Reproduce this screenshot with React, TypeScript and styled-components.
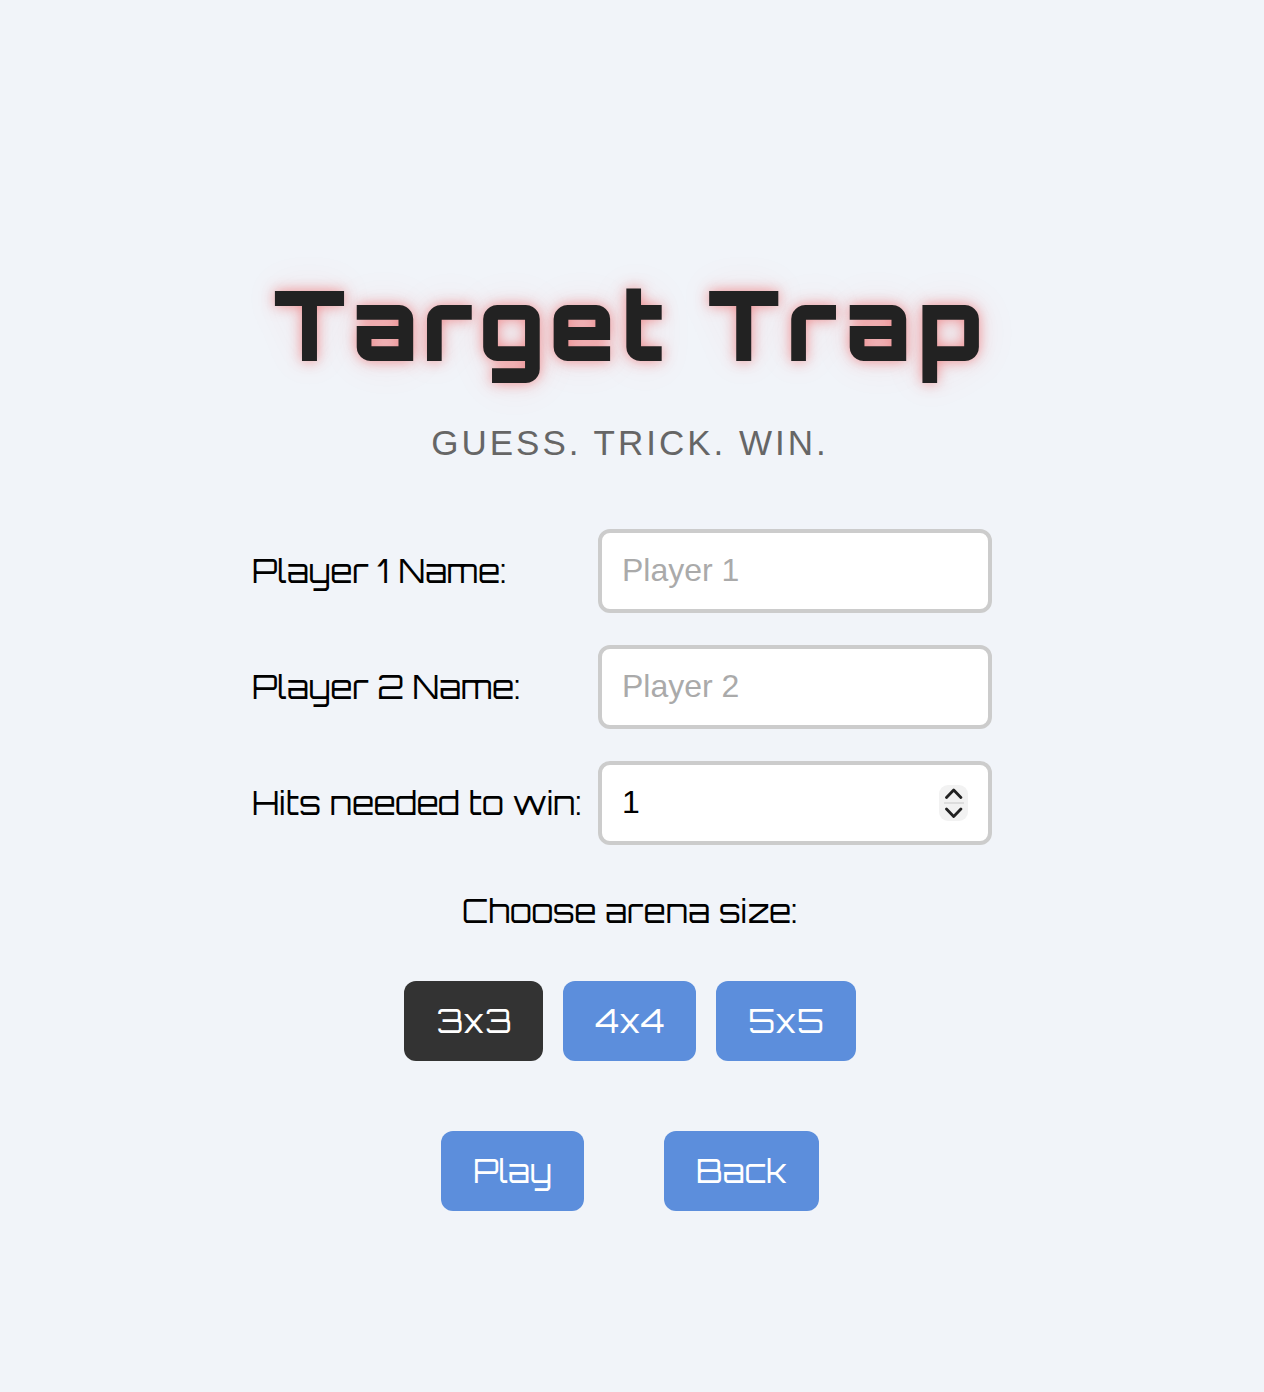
import React, { useState } from "react";
import styled, { createGlobalStyle } from "styled-components";

const display = `Orbitron, "DejaVu Sans", Verdana, sans-serif`;
const body = `Helvetica, "Liberation Sans", Arial, sans-serif`;

const GlobalStyle = createGlobalStyle`
  *, *::before, *::after { box-sizing: border-box; }
  body {
    margin: 0;
    background: #f1f4f9;
    color: #000;
    font-family: ${body};
  }
`;

const Page = styled.main`
  min-height: 100vh;
  padding: 84px 4px 0 0;
  display: flex;
  flex-direction: column;
  align-items: center;
  justify-content: center;
`;

const Title = styled.h1`
  margin: 0;
  font-family: ${display};
  font-size: 96px;
  line-height: 118px;
  font-weight: 900;
  letter-spacing: 6px;
  text-align: center;
  color: #222;
  text-shadow: 0 0 14px rgba(236, 60, 60, 0.55), 0 0 40px rgba(240, 60, 60, 0.1);
`;

const Tagline = styled.p`
  margin: 38px 0 0;
  font-size: 35px;
  line-height: 44px;
  letter-spacing: 3px;
  text-align: center;
  text-transform: uppercase;
  color: #666;
`;

const Form = styled.form`
  margin-top: 64px;
  display: flex;
  flex-direction: column;
  align-items: center;
`;

const Fields = styled.div`
  width: 756px;
  max-width: 100%;
  padding-right: 16px;
  display: flex;
  flex-direction: column;
  gap: 32px;
`;

const Field = styled.div`
  display: flex;
  align-items: center;
  justify-content: space-between;
`;

const Label = styled.label`
  font-family: ${display};
  font-size: 32px;
  line-height: 40px;
  white-space: nowrap;
`;

const Box = styled.div`
  width: 394px;
  min-width: 0;
  height: 84px;
  padding: 0 20px;
  display: flex;
  align-items: center;
  background: #fff;
  border: 4px solid #ccc;
  border-radius: 12px;
`;

const Input = styled.input`
  flex: 1;
  min-width: 0;
  padding: 0 0 2px;
  border: 0;
  outline: 0;
  background: transparent;
  color: #000;
  font-family: ${body};
  font-size: 32px;
  line-height: 40px;
  appearance: textfield;

  &::placeholder { color: #aaa; opacity: 1; }
  &::-webkit-inner-spin-button { appearance: none; margin: 0; }
`;

const Stepper = styled.div`
  width: 29px;
  height: 36px;
  display: flex;
  flex-direction: column;
  align-items: center;
  background: #f2f2f2;
  border-radius: 9px;
`;

const Step = styled.button`
  flex: 1;
  width: 100%;
  padding: 0;
  border: 0;
  background: none;
  display: flex;
  align-items: center;
  justify-content: center;
  cursor: pointer;
`;

const StepLine = styled.span`
  width: 20px;
  height: 2px;
  background: #ddd;
`;

const Arena = styled.fieldset`
  margin: 46px 0 0;
  padding: 0;
  border: 0;
  text-align: center;
`;

const Legend = styled.legend`
  margin: 0 auto;
  padding: 0;
  font-family: ${display};
  font-size: 32px;
  line-height: 40px;
`;

const ButtonRow = styled.div<{ $gap: number; $top: number }>`
  margin-top: ${(p) => p.$top}px;
  display: flex;
  justify-content: center;
  gap: ${(p) => p.$gap}px;
`;

const Button = styled.button<{ $selected?: boolean }>`
  height: 80px;
  padding: 0 32px;
  border: 0;
  border-radius: 12px;
  background: ${(p) => (p.$selected ? "#333" : "#5c8edc")};
  color: #fff;
  font-family: ${display};
  font-size: 32px;
  line-height: 40px;
  cursor: pointer;
`;

const sizes = ["3x3", "4x4", "5x5"];

function Chevron({ d }: { d: string }) {
  return (
    <svg width="18" height="12" viewBox="0 0 18 12" fill="none" aria-hidden="true">
      <path d={d} stroke="#222" strokeWidth="2.8" strokeLinecap="round" strokeLinejoin="round" />
    </svg>
  );
}

export default function App() {
  const [size, setSize] = useState("3x3");
  const [hits, setHits] = useState(1);

  return (
    <>
      <GlobalStyle />
      <Page>
        <Title>Target Trap</Title>
        <Tagline>Guess. Trick. Win.</Tagline>
        <Form onSubmit={(e) => e.preventDefault()}>
          <Fields>
            <Field>
              <Label htmlFor="player1">Player 1 Name:</Label>
              <Box>
                <Input id="player1" type="text" placeholder="Player 1" />
              </Box>
            </Field>
            <Field>
              <Label htmlFor="player2">Player 2 Name:</Label>
              <Box>
                <Input id="player2" type="text" placeholder="Player 2" />
              </Box>
            </Field>
            <Field>
              <Label htmlFor="hits">Hits needed to win:</Label>
              <Box>
                <Input
                  id="hits"
                  type="number"
                  min={1}
                  value={hits}
                  onChange={(e) => setHits(Number(e.target.value))}
                />
                <Stepper>
                  <Step type="button" aria-label="More hits" onClick={() => setHits(hits + 1)}>
                    <Chevron d="M1.5 9.5 8.7 2l7.2 7.5" />
                  </Step>
                  <StepLine />
                  <Step
                    type="button"
                    aria-label="Fewer hits"
                    onClick={() => setHits(Math.max(1, hits - 1))}
                  >
                    <Chevron d="M1.5 2 8.7 9.5 15.9 2" />
                  </Step>
                </Stepper>
              </Box>
            </Field>
          </Fields>
          <Arena>
            <Legend>Choose arena size:</Legend>
            <ButtonRow $gap={20} $top={50}>
              {sizes.map((name) => (
                <Button
                  key={name}
                  type="button"
                  $selected={name === size}
                  aria-pressed={name === size}
                  onClick={() => setSize(name)}
                >
                  {name}
                </Button>
              ))}
            </ButtonRow>
          </Arena>
          <ButtonRow $gap={80} $top={70}>
            <Button type="submit">Play</Button>
            <Button type="button">Back</Button>
          </ButtonRow>
        </Form>
      </Page>
    </>
  );
}
